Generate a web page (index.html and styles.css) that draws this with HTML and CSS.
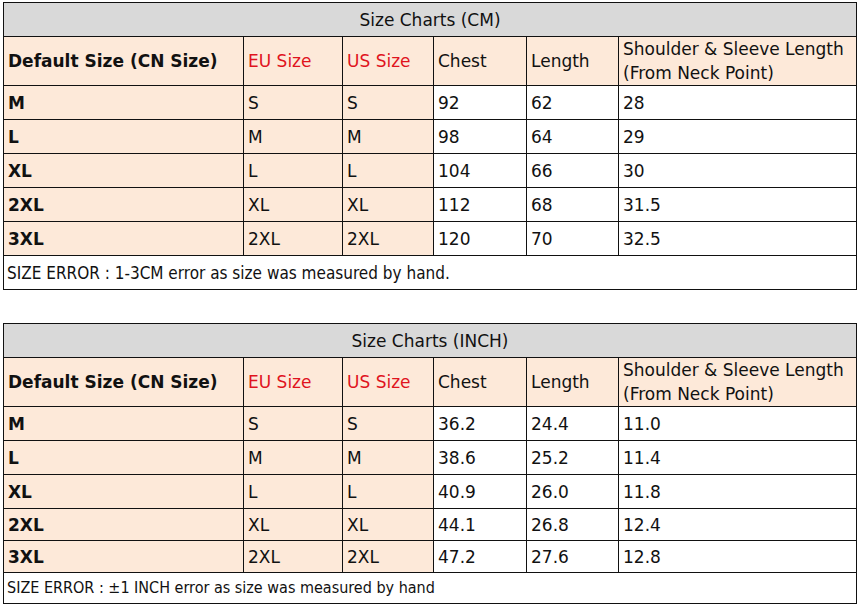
FILE: index.html
```html
<!DOCTYPE html>
<html>
<head>
<meta charset="utf-8">
<link rel="stylesheet" href="styles.css">
</head>
<body>
<div class="page">
<table class="chart">
  <colgroup><col class="c1"><col class="c2"><col class="c3"><col class="c4"><col class="c5"><col class="c6"></colgroup>
  <tr class="title"><td colspan="6">Size Charts (CM)</td></tr>
  <tr class="head">
    <td class="bold">Default Size (CN Size)</td><td class="red">EU Size</td><td class="red">US Size</td><td>Chest</td><td>Length</td><td>Shoulder &amp; Sleeve Length<br>(From Neck Point)</td>
  </tr>
  <tr><td class="p bold">M</td><td class="p">S</td><td class="p">S</td><td>92</td><td>62</td><td>28</td></tr>
  <tr><td class="p bold">L</td><td class="p">M</td><td class="p">M</td><td>98</td><td>64</td><td>29</td></tr>
  <tr><td class="p bold">XL</td><td class="p">L</td><td class="p">L</td><td>104</td><td>66</td><td>30</td></tr>
  <tr><td class="p bold">2XL</td><td class="p">XL</td><td class="p">XL</td><td>112</td><td>68</td><td>31.5</td></tr>
  <tr><td class="p bold">3XL</td><td class="p">2XL</td><td class="p">2XL</td><td>120</td><td>70</td><td>32.5</td></tr>
  <tr class="note"><td colspan="6">SIZE ERROR : 1-3CM error as size was measured by hand.</td></tr>
</table>
<table class="chart">
  <colgroup><col class="c1"><col class="c2"><col class="c3"><col class="c4"><col class="c5"><col class="c6"></colgroup>
  <tr class="title"><td colspan="6">Size Charts (INCH)</td></tr>
  <tr class="head">
    <td class="bold">Default Size (CN Size)</td><td class="red">EU Size</td><td class="red">US Size</td><td>Chest</td><td>Length</td><td>Shoulder &amp; Sleeve Length<br>(From Neck Point)</td>
  </tr>
  <tr><td class="p bold">M</td><td class="p">S</td><td class="p">S</td><td>36.2</td><td>24.4</td><td>11.0</td></tr>
  <tr><td class="p bold">L</td><td class="p">M</td><td class="p">M</td><td>38.6</td><td>25.2</td><td>11.4</td></tr>
  <tr><td class="p bold">XL</td><td class="p">L</td><td class="p">L</td><td>40.9</td><td>26.0</td><td>11.8</td></tr>
  <tr class="short"><td class="p bold">2XL</td><td class="p">XL</td><td class="p">XL</td><td>44.1</td><td>26.8</td><td>12.4</td></tr>
  <tr class="short"><td class="p bold">3XL</td><td class="p">2XL</td><td class="p">2XL</td><td>47.2</td><td>27.6</td><td>12.8</td></tr>
  <tr class="note note2"><td colspan="6">SIZE ERROR : ±1 INCH error as size was measured by hand</td></tr>
</table>
</div>
</body>
</html>
```
FILE: styles.css
```css
html, body { margin: 0; padding: 0; background: #fff; }
.page {
  padding: 2px 0 0 3px;
  display: flex;
  flex-direction: column;
  gap: 33px;
  font-family: "DejaVu Sans", Verdana, sans-serif;
  color: #111;
}
.chart {
  border-collapse: collapse;
  table-layout: fixed;
  width: 853px;
  font-size: 17px;
}
.c1 { width: 240px; }
.c2 { width: 99px; }
.c3 { width: 91px; }
.c4 { width: 93px; }
.c5 { width: 92px; }
.c6 { width: 238px; }
.chart td {
  border: 1px solid #111;
  padding: 0 4px;
  height: 33px;
  line-height: 24px;
  white-space: nowrap;
  vertical-align: middle;
}
.title td {
  background: #d9d9d9;
  text-align: center;
}
.head td {
  background: #fde9d9;
  height: 47px;
}
.p { background: #fde9d9; }
.bold { font-weight: bold; }
.red { color: #e0141e; }
.short td { height: 31px; }
.note td {
  font-family: "DejaVu Sans Condensed", "DejaVu Sans", sans-serif;
  padding-left: 3px;
}
.note2 td { height: 30px; font-size: 16px; }
```
